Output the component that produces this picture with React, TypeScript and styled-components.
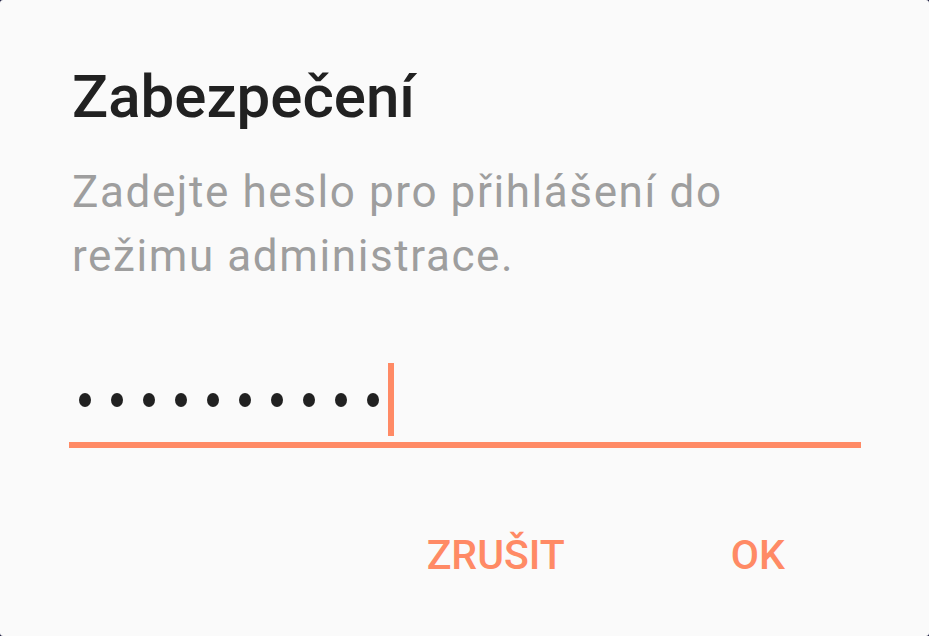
import styled, {createGlobalStyle} from "styled-components";

const GlobalStyle = createGlobalStyle`
  html, body {
    margin: 0;
    padding: 0;
    background: #16163a;
  }
  body {
    font-family: Roboto, "Liberation Sans", sans-serif;
  }
`;

const accent = "#ff8a65";

const Dialog = styled.div`
  width: 929px;
  height: 636px;
  box-sizing: border-box;
  background: #fafafa;
  border-radius: 3px;
  display: flex;
  flex-direction: column;
  overflow: hidden;
`;

const Title = styled.h1`
  margin: 62px 0 0 72px;
  font-size: 60px;
  line-height: 70px;
  font-weight: 500;
  color: #212121;
`;

const Message = styled.p`
  margin: 28px 0 0 72px;
  width: 720px;
  font-size: 44px;
  line-height: 64px;
  letter-spacing: 1.6px;
  font-weight: 400;
  color: #9e9e9e;
`;

const Field = styled.div`
  margin: 75px 68px 0 69px;
  display: flex;
  flex-direction: column;
`;

const Value = styled.div`
  height: 73px;
  display: flex;
  align-items: center;
  padding-left: 10px;
  gap: 9px;
`;

const Dots = styled.div`
  display: flex;
  gap: 20px;
`;

const Dot = styled.span`
  width: 12px;
  height: 14px;
  border-radius: 50%;
  background: #212121;
`;

const Caret = styled.span`
  width: 6px;
  height: 73px;
  background: ${accent};
`;

const Underline = styled.div`
  margin-top: 6px;
  height: 6px;
  background: ${accent};
`;

const Actions = styled.div`
  margin-top: 82px;
  padding-right: 102px;
  display: flex;
  justify-content: flex-end;
  gap: 82px;
`;

const TextButton = styled.button`
  border: none;
  background: none;
  padding: 0 42px;
  font-family: Roboto, "Liberation Sans", sans-serif;
  font-size: 41px;
  line-height: 50px;
  font-weight: 500;
  color: ${accent};
  cursor: pointer;
`;

const App = () => {
    const password = "**********";

    return (
        <>
            <GlobalStyle/>
            <Dialog>
                <Title>Zabezpečení</Title>
                <Message>Zadejte heslo pro přihlášení do režimu administrace.</Message>
                <Field>
                    <Value>
                        <Dots>
                            {password.split("").map((_, i) => <Dot key={i}/>)}
                        </Dots>
                        <Caret/>
                    </Value>
                    <Underline/>
                </Field>
                <Actions>
                    <TextButton>ZRUŠIT</TextButton>
                    <TextButton>OK</TextButton>
                </Actions>
            </Dialog>
        </>
    );
}

export default App;
